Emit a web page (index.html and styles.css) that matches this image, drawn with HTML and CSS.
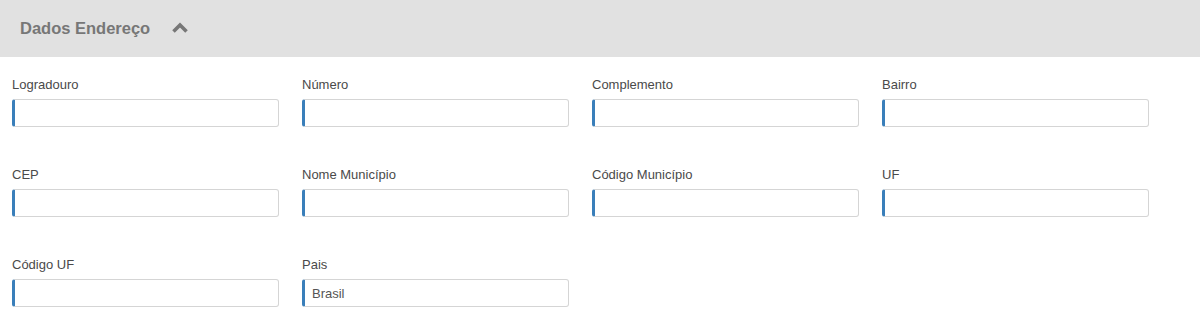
FILE: index.html
```html
<!DOCTYPE html>
<html>
<head>
    <title>Dados Endereço</title>
    <link rel="stylesheet" href="styles.css">
</head>
<body>
    <div class="panel">
        <div class="panel-header">
            <h3>Dados Endereço</h3>
            <svg class="chevron" width="16" height="12" viewBox="0 0 16 12">
                <path d="M1.5 9.5 L8 3 L14.5 9.5" fill="none" stroke="#777" stroke-width="3.6" stroke-linejoin="miter"/>
            </svg>
        </div>

        <div class="form-grid">
            <div class="field">
                <label>Logradouro</label>
                <input type="text">
            </div>
            <div class="field">
                <label>Número</label>
                <input type="text">
            </div>
            <div class="field">
                <label>Complemento</label>
                <input type="text">
            </div>
            <div class="field">
                <label>Bairro</label>
                <input type="text">
            </div>

            <div class="field">
                <label>CEP</label>
                <input type="text">
            </div>
            <div class="field">
                <label>Nome Município</label>
                <input type="text">
            </div>
            <div class="field">
                <label>Código Município</label>
                <input type="text">
            </div>
            <div class="field">
                <label>UF</label>
                <input type="text">
            </div>

            <div class="field">
                <label>Código UF</label>
                <input type="text">
            </div>
            <div class="field">
                <label>Pais</label>
                <input type="text" value="Brasil">
            </div>
        </div>
    </div>
</body>
</html>
```

FILE: styles.css
```css
body {
    margin: 0;
    font-family: 'Liberation Sans', Arial, sans-serif;
    background: #fff;
}

.panel-header {
    display: flex;
    align-items: center;
    gap: 22px;
    height: 57px;
    padding-left: 20px;
    background-color: #e1e1e1;
}

.panel-header h3 {
    margin: 0;
    font-size: 16.5px;
    font-weight: bold;
    color: #777;
}

.chevron {
    display: block;
    margin-top: -1px;
}

.form-grid {
    display: grid;
    grid-template-columns: repeat(4, 267px);
    column-gap: 23px;
    row-gap: 40px;
    padding: 20px 0 0 12px;
}

.field label {
    display: block;
    height: 15px;
    margin-bottom: 7px;
    font-size: 13px;
    color: #4a4a4a;
}

.field input {
    display: block;
    box-sizing: border-box;
    width: 267px;
    height: 28px;
    margin: 0;
    padding: 0 7px;
    border: 1px solid #d5d5d5;
    border-left: 3px solid #3a7fba;
    border-radius: 3px;
    font-family: 'Liberation Sans', Arial, sans-serif;
    font-size: 13px;
    color: #555;
    background: #fff;
}
```
